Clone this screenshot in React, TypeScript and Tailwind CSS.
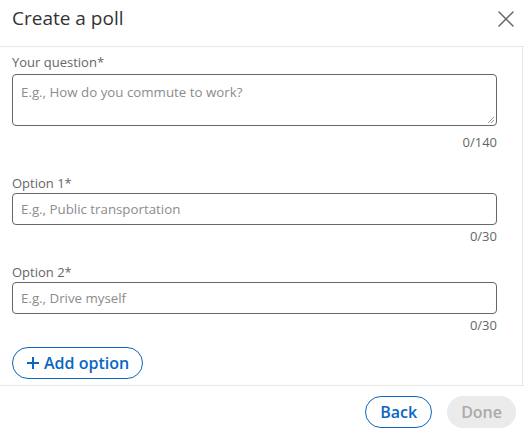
import React from "react";

const font = { fontFamily: '"Open Sans", "Noto Sans", sans-serif' };

function Label({ children }: { children: React.ReactNode }) {
  return <label className="text-[13px] leading-[18px] text-[#666666]">{children}</label>;
}

function Count({ children, className }: { children: React.ReactNode; className: string }) {
  return <div className={"text-right text-[13px] leading-[18px] text-[#666666] " + className}>{children}</div>;
}

export default function App() {
  return (
    <div className="h-[438px] w-[524px] bg-white flex flex-col" style={font}>
      <div className="flex h-[47px] items-center justify-between border-b border-[#e8e8e8] pl-[12px] pr-[6px]">
        <h2 className="text-[19px] leading-[28px] text-[#333333] -mt-[10px]">Create a poll</h2>
        <svg className="-mt-[9px]" width="24" height="24" viewBox="0 0 24 24">
          <path d="M5 5 L19 19 M19 5 L5 19" stroke="#666666" strokeWidth="1.5" strokeLinecap="round" />
        </svg>
      </div>
      <div className="flex w-[523px] flex-1 flex-col border-r border-[#e8e8e8] pl-[12px] pr-[25px] pt-[6px]">
        <div className="flex flex-col">
          <Label>Your question*</Label>
          <div className="relative mt-[3px] h-[52px] rounded-[4px] border border-[#666666] px-[8px] pt-[4px]">
            <span className="text-[13.3px] leading-[20px] text-[#8c8c8c]">E.g., How do you commute to work?</span>
            <svg className="absolute bottom-[1px] right-[1px]" width="9" height="9" viewBox="0 0 9 9">
              <path d="M8 2 L2 8 M8 5 L5 8" stroke="#999" strokeWidth="1" />
            </svg>
          </div>
          <Count className="mt-[7px]">0/140</Count>
        </div>
        <div className="mt-[23px] flex flex-col">
          <Label>Option 1*</Label>
          <div className="mt-[1px] flex h-[32px] items-center rounded-[4px] border border-[#666666] px-[8px]">
            <span className="text-[13.3px] leading-[20px] text-[#8c8c8c]">E.g., Public transportation</span>
          </div>
          <Count className="mt-[2px]">0/30</Count>
        </div>
        <div className="mt-[18px] flex flex-col">
          <Label>Option 2*</Label>
          <div className="mt-[1px] flex h-[32px] items-center rounded-[4px] border border-[#666666] px-[8px]">
            <span className="text-[13.3px] leading-[20px] text-[#8c8c8c]">E.g., Drive myself</span>
          </div>
          <Count className="mt-[2px]">0/30</Count>
        </div>
        <div className="mt-[13px]">
          <button className="flex h-[32px] items-center gap-[4px] rounded-full border border-[#0a66c2] px-[13px] text-[16px] font-semibold text-[#0a66c2]">
            <svg width="14" height="14" viewBox="0 0 14 14">
              <path d="M7 1 V13 M1 7 H13" stroke="#0a66c2" strokeWidth="2" />
            </svg>
            Add option
          </button>
        </div>
      </div>
      <div className="flex h-[53px] items-center justify-end gap-[15px] border-t border-[#e8e8e8] pr-[8px]">
        <button className="h-[32px] rounded-full border border-[#0a66c2] px-[14px] text-[16px] font-semibold text-[#0a66c2]">Back</button>
        <button className="h-[32px] rounded-full bg-[#ebebeb] px-[14px] text-[16px] font-semibold text-[#aaaaaa]">Done</button>
      </div>
    </div>
  );
}
